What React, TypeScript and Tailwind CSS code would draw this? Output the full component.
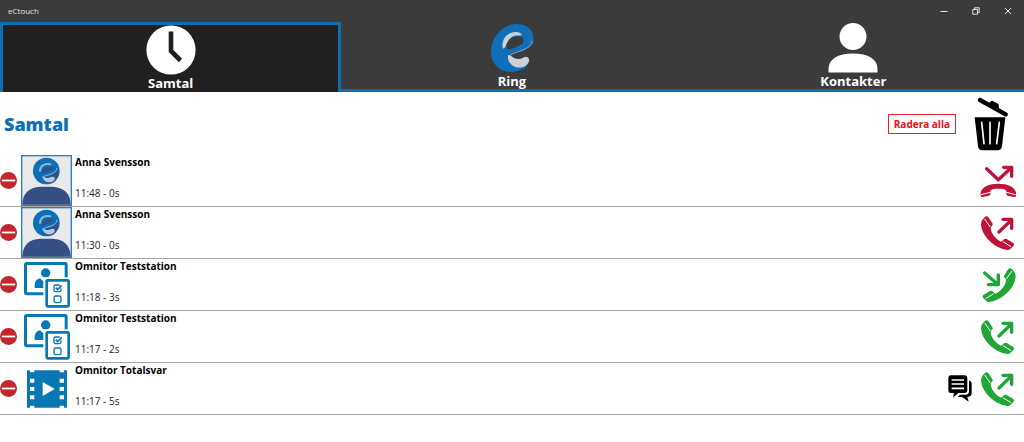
import clsx from "clsx";
import React from "react";

type CallType = "missed" | "failed" | "incoming" | "outgoing";
type Picture = "person" | "station" | "film";

type Call = {
  id: number;
  name: string;
  time: string;
  type: CallType;
  picture: Picture;
  hasChat?: boolean;
};

const calls: Call[] = [
  { id: 1, name: "Anna Svensson", time: "11:48 - 0s", type: "missed", picture: "person" },
  { id: 2, name: "Anna Svensson", time: "11:30 - 0s", type: "failed", picture: "person" },
  { id: 3, name: "Omnitor Teststation", time: "11:18 - 3s", type: "incoming", picture: "station" },
  { id: 4, name: "Omnitor Teststation", time: "11:17 - 2s", type: "outgoing", picture: "station" },
  { id: 5, name: "Omnitor Totalsvar", time: "11:17 - 5s", type: "outgoing", picture: "film", hasChat: true },
];

const ClockIcon = () => (
  <svg aria-hidden="true" className="size-[50px]" viewBox="0 0 50 50">
    <circle cx="25" cy="25" fill="#fff" r="24.6" />
    <path d="M25 6.500V26L34.500 35.500" fill="none" stroke="#202020" strokeWidth="4.600" />
  </svg>
);

const ELogo = () => (
  <svg aria-hidden="true" className="h-[50px] w-11" viewBox="0 0 132 150">
    <path
      d="M130 46C130 18 108 3 82 3C38 3 3 42 3 88C3 122 28 147 62 147C92 147 118 132 117 110L60 100C58 92 72 90 88 86C112 80 130 70 130 46Z"
      fill="#0f6fb8"
    />
    <path d="M50 74C46 56 62 40 90 40C106 44 104 62 86 69C74 74 52 86 50 74Z" fill="#3b3b3b" />
    <path
      d="M38 74C34 50 50 28 76 27C88 27 97 32 94 36C90 39 82 36 74 38C60 42 52 54 47 69C45 76 39 79 38 74Z"
      fill="#cdd0d6"
    />
    <path d="M60 97C74 86 122 82 128 54" fill="none" stroke="#aab4c0" strokeWidth="2.500" />
    <path d="M61 98C76 89 112 86 127 68L119 106L72 108Z" fill="#3b3b3b" />
    <path
      d="M54 98C55 94 62 96 68 102C78 110 90 109 99 104C112 97 121 106 116 117C110 131 92 137 76 132C60 126 52 112 54 98Z"
      fill="#cdd0d6"
    />
  </svg>
);

const PersonIcon = () => (
  <svg aria-hidden="true" className="size-[50px]" viewBox="0 0 50 50">
    <circle cx="25" cy="13.500" fill="#fff" r="13.500" />
    <path d="M.5 49.500V46C.5 36 10 30.500 25 30.500S49.500 36 49.500 46V49.500Z" fill="#fff" />
  </svg>
);

const TrashIcon = () => (
  <svg aria-hidden="true" className="h-[54px] w-[34px]" viewBox="0 0 102 162">
    <path d="M18 9L95 52" stroke="#000" strokeLinecap="round" strokeWidth="13" />
    <path d="M46 20L54 13L72 23L73 35Z" fill="#000" stroke="#000" strokeLinejoin="round" strokeWidth="4" />
    <path d="M2 61H94L84 148Q82 160 71 160H25Q14 160 12 148Z" fill="#000" />
    <path d="M23 76L30 140M48 76V140M76 76L68 140" stroke="#fff" strokeLinecap="round" strokeWidth="5" />
  </svg>
);

const RemoveIcon = () => (
  <svg aria-hidden="true" className="size-[17px]" viewBox="0 0 17 17">
    <circle cx="8.500" cy="8.500" fill="#c1272d" r="8.500" />
    <path d="M1.800 8.500H15.200" stroke="#fff" strokeWidth="1.800" />
  </svg>
);

const ChatIcon = () => (
  <svg aria-label="Chatt" className="h-[27px] w-6" role="img" viewBox="0 0 72 81">
    <path d="M9 1H49Q58 1 58 10V45Q58 54 49 54H31L15 68L18 54H9Q1 54 1 45V10Q1 1 9 1Z" fill="#000" />
    <path d="M11 15H48M11 27H48M11 40H48" stroke="#fff" strokeWidth="5" />
    <path d="M63 17Q71 18 71 27V55Q71 64 62 65H58L62 80L42 66H29L36 59H53Q63 59 63 48Z" fill="#000" />
  </svg>
);

const Handset = () => (
  <>
    <path
      d="M11 10L18 4Q22 3 25 6L38 26Q39 31 35 33L32 38C32 54 48 74 64 80L72 73Q76 70 80 72L100 84Q104 88 101 92L94 99Q89 106 82 105C44 101 5 64 3 28Q3 17 11 10Z"
      fill="currentColor"
      stroke="none"
    />
    <path d="M14 12L31 36M69 80L93 95" stroke="#fff" strokeLinecap="butt" strokeWidth="3" />
  </>
);

const CallIcon = ({ type }: { type: CallType }) => {
  const color = type === "missed" || type === "failed" ? "text-[#be1238]" : "text-[#1fa637]";

  return (
    <svg
      aria-hidden="true"
      className={clsx("size-9", color)}
      fill="none"
      stroke="currentColor"
      strokeLinecap="round"
      strokeLinejoin="round"
      viewBox="0 0 108 108"
    >
      {type === "missed" && (
        <>
          <path d="M20 17L55 50L92 16M71 13H95V40" strokeWidth="10" />
          <path
            d="M2 88C6 72 28 62 55 62S104 72 108 88V98Q108 103 102 102L83 98Q79 97 79 92L79 83C74 77 66 77 55 77S36 77 31 83V92Q31 97 27 98L8 102Q2 103 2 98Z"
            fill="currentColor"
            stroke="none"
          />
          <path d="M3 95L31 88M79 88L107 95" stroke="#fff" strokeLinecap="butt" strokeWidth="3" />
        </>
      )}
      {(type === "failed" || type === "outgoing") && (
        <>
          <path d="M57 51L93 16M69 13H95V40" strokeWidth="10" />
          <Handset />
        </>
      )}
      {type === "incoming" && (
        <>
          <path d="M14 18L52 51M25 53H55V24" strokeWidth="10" />
          <g transform="matrix(-1 0 0 1 110 0)">
            <Handset />
          </g>
        </>
      )}
    </svg>
  );
};

const PersonPicture = () => (
  <svg aria-hidden="true" className="size-[51px]" viewBox="0 0 153 153">
    <rect fill="#e9e9ea" height="149" stroke="#2482c4" strokeWidth="4" width="149" x="2" y="2" />
    <circle cx="76" cy="48" fill="#0b70b5" r="40" />
    <path
      d="M66 68C84 62 106 60 110 40A40 40 0 0 1 100 80C88 90 64 84 66 68ZM62 56C64 40 76 32 96 36C100 46 80 50 62 56Z"
      fill="#364f85"
    />
    <path d="M57 48C57 32 72 24 88 28" fill="none" stroke="#8fb6d8" strokeLinecap="round" strokeWidth="6" />
    <path d="M64 66C80 58 106 58 108 40" fill="none" stroke="#8fb6d8" strokeLinecap="round" strokeWidth="3" />
    <path d="M66 67C70 62 76 74 88 67C98 62 104 68 100 76C92 86 66 84 66 67Z" fill="#b5cadf" />
    <path d="M4 149C4 116 24 96 58 95H94C128 96 149 116 149 149Z" fill="#364f85" />
  </svg>
);

const StationPicture = () => (
  <svg aria-hidden="true" className="size-[46px]" viewBox="0 0 138 138">
    <rect fill="none" height="91" rx="3" stroke="#0878b4" strokeWidth="9" width="122" x="4.500" y="4.500" />
    <circle cx="65" cy="33" fill="#0878b4" r="14" />
    <path d="M32 78V68Q34 51 48 49L64 64L80 49H96V78Z" fill="#0878b4" />
    <rect fill="#fff" height="92" width="80" x="58" y="46" />
    <rect fill="#fff" height="78" rx="3" stroke="#0878b4" strokeWidth="8" width="66" x="68" y="55" />
    <path d="M107 69H94Q90 69 90 74V84Q90 89 95 89H106Q111 89 111 84V79" fill="none" stroke="#0878b4" strokeWidth="4" />
    <path d="M95 77L101 83L113 70" fill="none" stroke="#0878b4" strokeWidth="5" />
    <rect fill="none" height="20" rx="5" stroke="#0878b4" strokeWidth="4" width="21" x="90" y="102" />
  </svg>
);

const FilmPicture = () => (
  <svg aria-hidden="true" className="h-[38px] w-10" viewBox="0 0 120 114">
    <path d="M0 1H9V7H22V1H98V7H111V1H120V113H111V107H98V113H22V107H9V113H0Z" fill="#0878b4" />
    <path
      d="M9 26H22V38H9ZM9 51H22V63H9ZM9 76H22V88H9ZM98 26H111V38H98ZM98 51H111V63H98ZM98 76H111V88H98ZM47 36L83 57L47 78Z"
      fill="#fff"
    />
  </svg>
);

const pictures = {
  person: <PersonPicture />,
  station: <StationPicture />,
  film: <FilmPicture />,
};

const TitleBar = () => (
  <div className="flex h-[22px] items-center justify-between px-2 text-[#e4e4e4]">
    <span className="text-[8px] leading-3">eCtouch</span>
    <div className="flex items-center gap-4">
      <button aria-label="Minimera" className="p-1" type="button">
        <svg className="size-2" fill="none" stroke="currentColor" viewBox="0 0 8 8">
          <path d="M.5 4.500H7.500" />
        </svg>
      </button>
      <button aria-label="Återställ" className="p-1" type="button">
        <svg className="size-2" fill="none" stroke="currentColor" viewBox="0 0 8 8">
          <path d="M.8 2.500H5.500V7.200H.8ZM2.500 2.500V.8H7.200V5.500H5.500" />
        </svg>
      </button>
      <button aria-label="Stäng" className="p-1" type="button">
        <svg className="size-2" fill="none" stroke="currentColor" viewBox="0 0 8 8">
          <path d="M1 1L7 7M7 1L1 7" />
        </svg>
      </button>
    </div>
  </div>
);

const tabs = [
  { label: "Samtal", icon: <ClockIcon /> },
  { label: "Ring", icon: <ELogo /> },
  { label: "Kontakter", icon: <PersonIcon /> },
];

const Tabs = () => (
  <nav className="grid h-[70px] grid-cols-3">
    {tabs.map((tab, i) => (
      <button
        className={clsx(
          "flex flex-col items-center border-[#0e70b4] text-[13px] font-bold leading-4 text-white",
          i === 0 ? "border-x-[3px] border-t-[3px] bg-[#202020]" : "border-b-[3px] pt-px"
        )}
        key={tab.label}
        type="button"
      >
        {tab.icon}
        {tab.label}
      </button>
    ))}
  </nav>
);

const CallRow = ({ call }: { call: Call }) => (
  <li className="flex h-[52px] items-center border-b border-[#a6a6a6] pr-2">
    <button aria-label={`Radera ${call.name}`} type="button">
      <RemoveIcon />
    </button>
    <div className="ml-1 flex w-[51px] shrink-0 justify-center">{pictures[call.picture]}</div>
    <div className="ml-[3px] flex flex-1 flex-col gap-[17px] self-start text-[10px] leading-[14px]">
      <span className="font-bold text-black">{call.name}</span>
      <span className="text-[#222]">{call.time}</span>
    </div>
    <div className="flex items-center gap-2">
      {call.hasChat && <ChatIcon />}
      <CallIcon type={call.type} />
    </div>
  </li>
);

export default function App() {
  return (
    <div className="min-h-screen bg-white font-['Open_Sans','Noto_Sans',sans-serif]">
      <header className="bg-[#3b3b3b]">
        <TitleBar />
        <Tabs />
      </header>
      <main>
        <div className="flex h-[63px] items-center justify-between pl-1 pr-4">
          <h1 className="text-lg font-extrabold leading-6 text-[#0e70b4]">Samtal</h1>
          <div className="flex items-center gap-[18px]">
            <button
              className="h-5 border border-[#f0202c] px-[5px] text-[10px] font-bold leading-4 text-[#e8101c]"
              type="button"
            >
              Radera alla
            </button>
            <button aria-label="Radera" type="button">
              <TrashIcon />
            </button>
          </div>
        </div>
        <ul>
          {calls.map((call) => (
            <CallRow call={call} key={call.id} />
          ))}
        </ul>
      </main>
    </div>
  );
}
